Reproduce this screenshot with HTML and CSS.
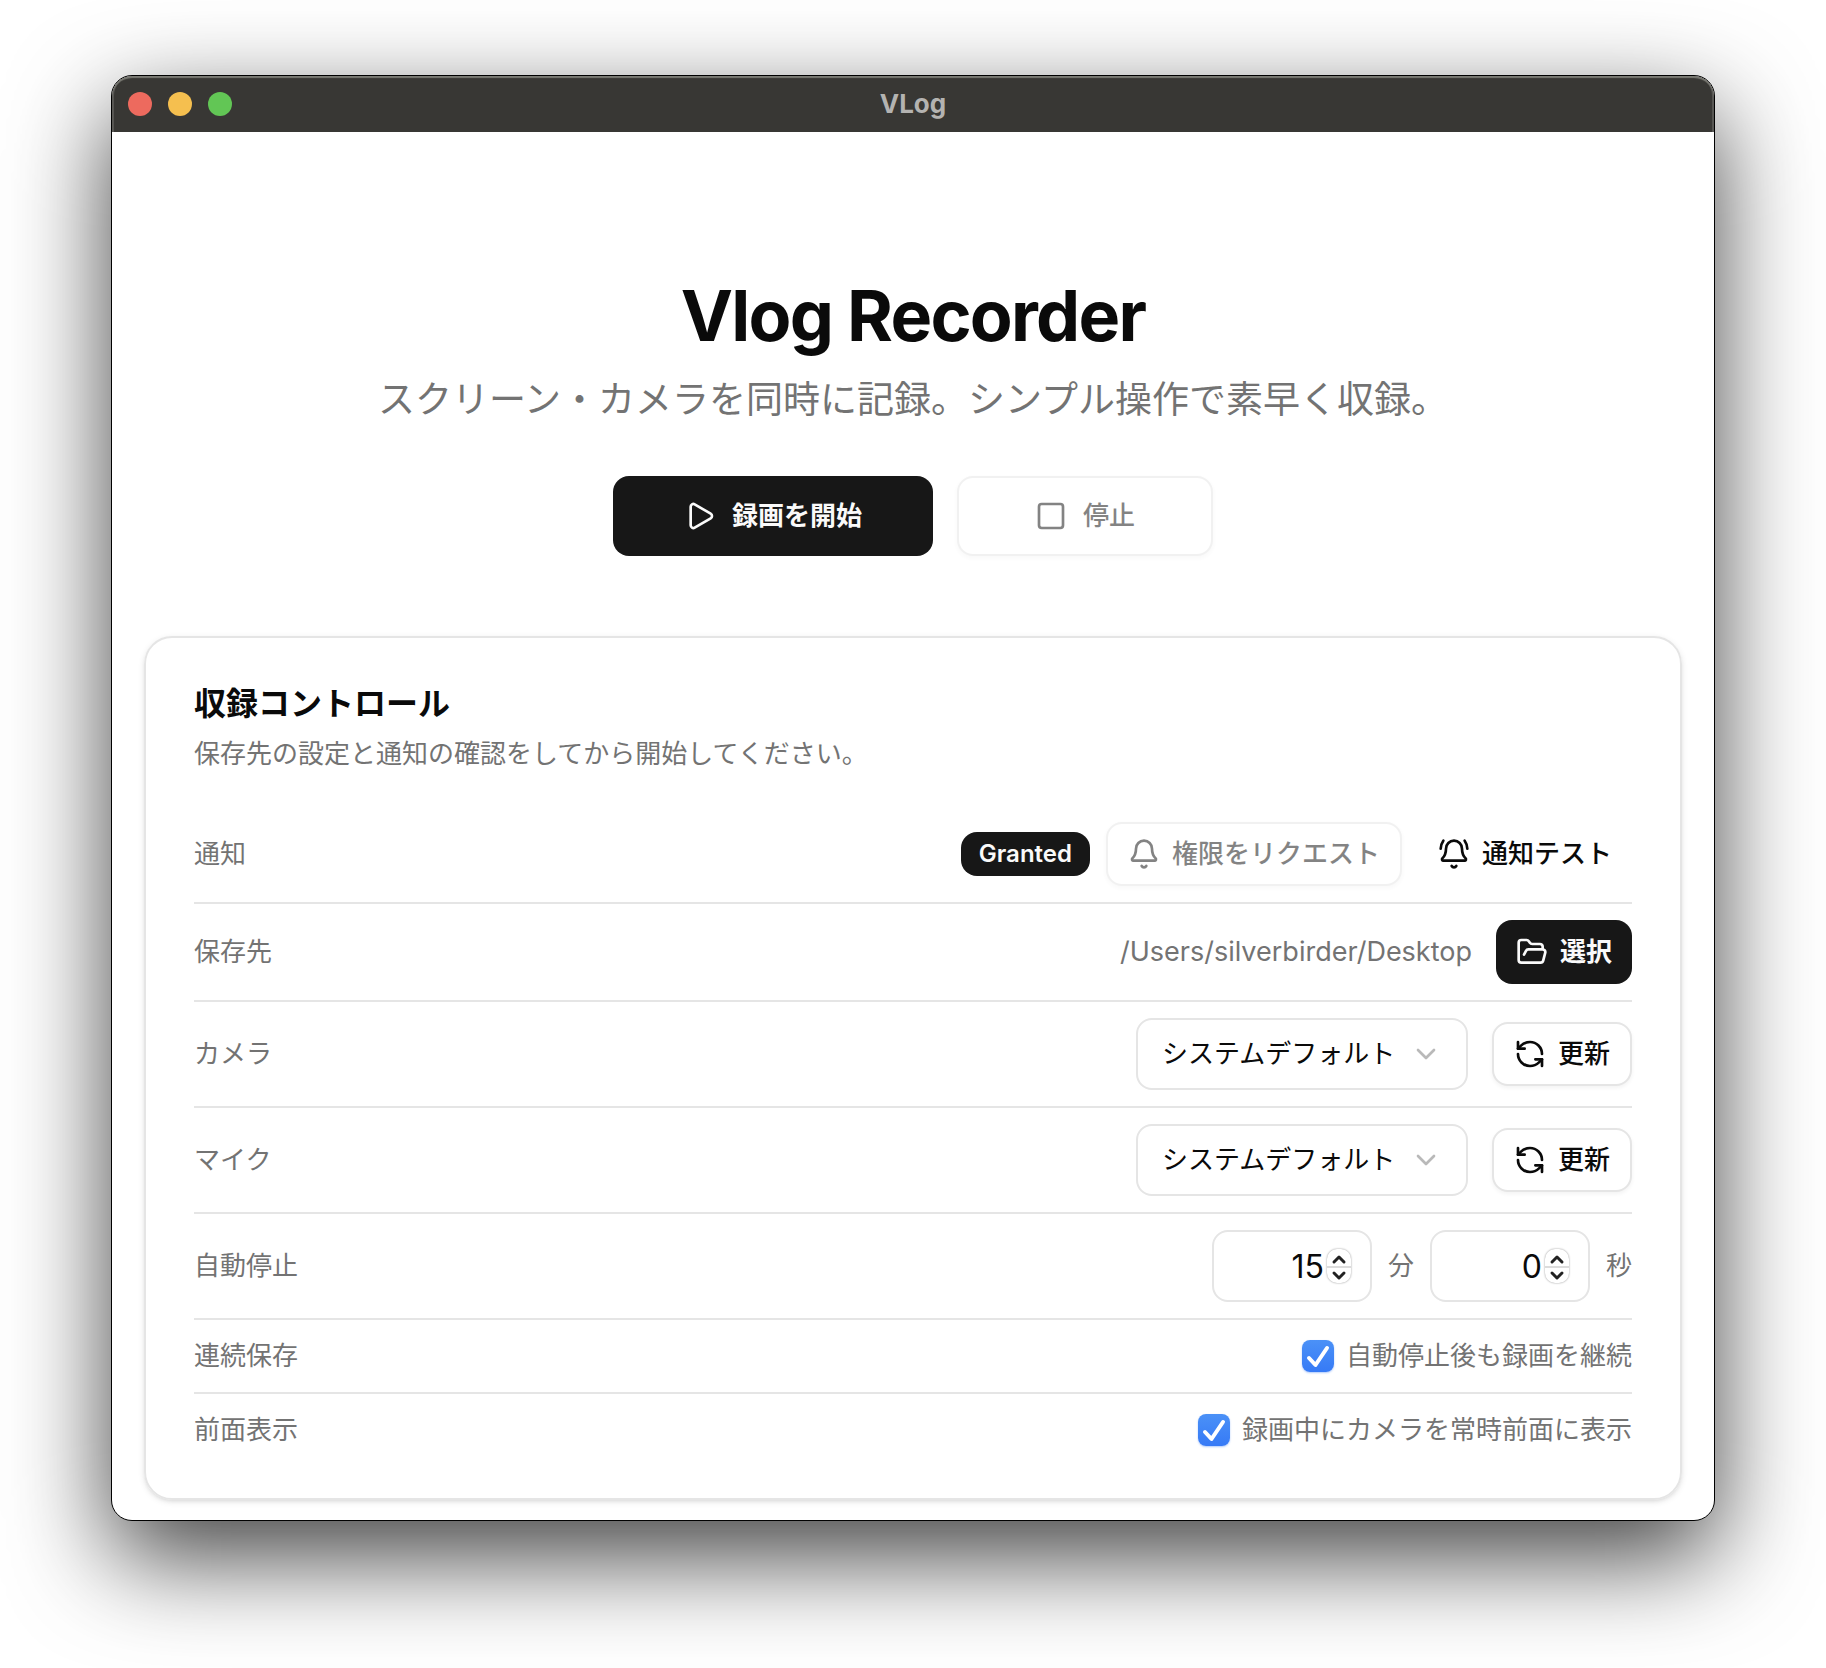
FILE: index.html
```html
<!DOCTYPE html>
<html lang="ja">
<head>
<meta charset="utf-8">
<meta name="viewport" content="width=device-width, initial-scale=1">
<title>VLog</title>
<link rel="stylesheet" href="styles.css">
</head>
<body>
<svg class="sprite" aria-hidden="true">
  <symbol id="play" viewBox="0 0 24 24"><path d="M5 5a2 2 0 0 1 3.008-1.728l11.997 6.998a2 2 0 0 1 .003 3.458l-12 7A2 2 0 0 1 5 19z"/></symbol>
  <symbol id="square" viewBox="0 0 24 24"><rect x="3" y="3" width="18" height="18" rx="2"/></symbol>
  <symbol id="bell" viewBox="0 0 24 24"><path d="M10.268 21a2 2 0 0 0 3.464 0"/><path d="M3.262 15.326A1 1 0 0 0 4 17h16a1 1 0 0 0 .74-1.673C19.41 13.956 18 12.499 18 8A6 6 0 0 0 6 8c0 4.499-1.411 5.956-2.738 7.326"/></symbol>
  <symbol id="bell-ring" viewBox="0 0 24 24"><path d="M10.268 21a2 2 0 0 0 3.464 0"/><path d="M22 8c0-2.3-.8-4.3-2-6"/><path d="M3.262 15.326A1 1 0 0 0 4 17h16a1 1 0 0 0 .74-1.673C19.41 13.956 18 12.499 18 8A6 6 0 0 0 6 8c0 4.499-1.411 5.956-2.738 7.326"/><path d="M4 2C2.8 3.7 2 5.7 2 8"/></symbol>
  <symbol id="folder" viewBox="0 0 24 24"><path d="m6 14 1.5-2.9A2 2 0 0 1 9.24 10H20a2 2 0 0 1 1.94 2.5l-1.54 6a2 2 0 0 1-1.95 1.5H4a2 2 0 0 1-2-2V5a2 2 0 0 1 2-2h3.9a2 2 0 0 1 1.69.9l.81 1.2a2 2 0 0 0 1.67.9H18a2 2 0 0 1 2 2v2"/></symbol>
  <symbol id="refresh" viewBox="0 0 24 24"><path d="M21 12a9 9 0 0 0-9-9 9.75 9.75 0 0 0-6.74 2.74L3 8"/><path d="M3 3v5h5"/><path d="M3 12a9 9 0 0 0 9 9 9.75 9.75 0 0 0 6.74-2.74L21 16"/><path d="M16 16h5v5"/></symbol>
  <symbol id="chevron" viewBox="0 0 24 24"><path d="m6 9 6 6 6-6"/></symbol>
  <symbol id="step-up" viewBox="0 0 24 17"><path d="m7 13 5-5 5 5"/></symbol>
  <symbol id="step-down" viewBox="0 0 24 17"><path d="m7 5 5 5 5-5"/></symbol>
</svg>

<div class="window">
  <header class="titlebar">
    <div class="lights">
      <span class="light light-close"></span>
      <span class="light light-minimize"></span>
      <span class="light light-zoom"></span>
    </div>
    <span class="titlebar-title">VLog</span>
  </header>

  <main class="content">
    <section class="hero">
      <h1 class="hero-title">Vlog Recorder</h1>
      <p class="hero-text">スクリーン・カメラを同時に記録。シンプル操作で素早く収録。</p>
      <div class="hero-actions">
        <button type="button" class="button button-primary button-large button-record"><svg class="icon"><use href="#play"/></svg>録画を開始</button>
        <button type="button" class="button button-outline button-large button-stop" disabled><svg class="icon"><use href="#square"/></svg>停止</button>
      </div>
    </section>

    <section class="card">
      <div class="card-header">
        <h2 class="card-title">収録コントロール</h2>
        <p class="card-text">保存先の設定と通知の確認をしてから開始してください。</p>
      </div>
      <div class="rows">
        <div class="row">
          <span class="row-label">通知</span>
          <div class="controls">
            <span class="badge">Granted</span>
            <button type="button" class="button button-outline" disabled><svg class="icon"><use href="#bell"/></svg>権限をリクエスト</button>
            <button type="button" class="button button-ghost"><svg class="icon"><use href="#bell-ring"/></svg>通知テスト</button>
          </div>
        </div>
        <div class="row">
          <span class="row-label">保存先</span>
          <div class="controls controls-wide">
            <span class="path">/Users/silverbirder/Desktop</span>
            <button type="button" class="button button-primary"><svg class="icon"><use href="#folder"/></svg>選択</button>
          </div>
        </div>
        <div class="row">
          <label class="row-label" for="camera">カメラ</label>
          <div class="controls controls-wide">
            <div class="select">
              <select class="select-field" id="camera"><option>システムデフォルト</option></select>
              <svg class="icon select-icon"><use href="#chevron"/></svg>
            </div>
            <button type="button" class="button button-outline"><svg class="icon"><use href="#refresh"/></svg>更新</button>
          </div>
        </div>
        <div class="row">
          <label class="row-label" for="mic">マイク</label>
          <div class="controls controls-wide">
            <div class="select">
              <select class="select-field" id="mic"><option>システムデフォルト</option></select>
              <svg class="icon select-icon"><use href="#chevron"/></svg>
            </div>
            <button type="button" class="button button-outline"><svg class="icon"><use href="#refresh"/></svg>更新</button>
          </div>
        </div>
        <div class="row">
          <span class="row-label">自動停止</span>
          <div class="controls">
            <div class="number">
              <input class="number-field" id="minutes" type="number" min="0" value="15">
              <div class="stepper">
                <button type="button" class="step" aria-label="分を増やす"><svg class="step-icon"><use href="#step-up"/></svg></button>
                <button type="button" class="step" aria-label="分を減らす"><svg class="step-icon"><use href="#step-down"/></svg></button>
              </div>
            </div>
            <label class="unit" for="minutes">分</label>
            <div class="number">
              <input class="number-field" id="seconds" type="number" min="0" max="59" value="0">
              <div class="stepper">
                <button type="button" class="step" aria-label="秒を増やす"><svg class="step-icon"><use href="#step-up"/></svg></button>
                <button type="button" class="step" aria-label="秒を減らす"><svg class="step-icon"><use href="#step-down"/></svg></button>
              </div>
            </div>
            <label class="unit" for="seconds">秒</label>
          </div>
        </div>
        <div class="row">
          <span class="row-label">連続保存</span>
          <label class="check"><input class="check-box" type="checkbox" checked>自動停止後も録画を継続</label>
        </div>
        <div class="row">
          <span class="row-label">前面表示</span>
          <label class="check"><input class="check-box" type="checkbox" checked>録画中にカメラを常時前面に表示</label>
        </div>
      </div>
    </section>
  </main>
</div>
</body>
</html>
```

FILE: styles.css
```css
:root {
  --ink: #0a0a0a;
  --primary: #171717;
  --muted: #737373;
  --line: #e5e5e5;
  --radius: 16px;
}

*,
*::before,
*::after {
  box-sizing: border-box;
}

body {
  margin: 0;
  padding: 75px 111px 147px;
  background: #fff;
  color: var(--ink);
  font-family: Inter, "Noto Sans CJK JP", sans-serif;
  font-size: 26px;
  line-height: 40px;
}

h1,
h2,
p {
  margin: 0;
}

button,
input,
select {
  font: inherit;
  color: inherit;
}

.sprite {
  display: none;
}

.icon {
  width: 32px;
  height: 32px;
  flex: none;
  fill: none;
  stroke: currentColor;
  stroke-width: 2;
  stroke-linecap: round;
  stroke-linejoin: round;
}

/* Window frame */

.window {
  overflow: hidden;
  border: 1px solid #000;
  border-radius: 21px;
  background: #fff;
  box-shadow: 0 36px 100px rgba(0, 0, 0, 0.75);
}

.titlebar {
  display: grid;
  grid-template-columns: 1fr auto 1fr;
  align-items: center;
  height: 56px;
  padding: 0 16px;
  border-radius: 20px 20px 0 0;
  background: #383734;
  box-shadow: inset 0 2px 1px #7b7b74, inset 2px 0 0 #565552, inset -2px 0 0 #565552;
}

.lights {
  display: flex;
  gap: 16px;
}

.light {
  width: 24px;
  height: 24px;
  border-radius: 50%;
}

.light-close {
  background: #ed6a5e;
}

.light-minimize {
  background: #f5bf4f;
}

.light-zoom {
  background: #62c655;
}

.titlebar-title {
  color: #b4b3b1;
  font-weight: 700;
}

/* Page */

.content {
  display: flex;
  flex-direction: column;
  gap: 80px;
  padding: 144px 32px 20px;
}

.hero {
  display: flex;
  flex-direction: column;
  align-items: center;
  text-align: center;
}

.hero-title {
  font-size: 70px;
  font-weight: 700;
  line-height: 80px;
  letter-spacing: -0.025em;
}

.hero-text {
  margin-top: 16px;
  color: var(--muted);
  font-size: 37px;
  line-height: 56px;
}

.hero-actions {
  display: flex;
  gap: 24px;
  margin-top: 48px;
}

/* Buttons */

.button {
  display: inline-flex;
  align-items: center;
  justify-content: center;
  gap: 12px;
  height: 64px;
  padding: 0 20px;
  border: 0;
  border-radius: var(--radius);
  background: none;
  font-weight: 500;
  white-space: nowrap;
}

.button:disabled {
  opacity: 0.5;
}

.button-primary {
  background: var(--primary);
  color: #fafafa;
  font-weight: 600;
}

.button-outline {
  border: 2px solid var(--line);
  background: #fff;
  box-shadow: 0 2px 4px rgba(0, 0, 0, 0.05);
}

.button-large {
  gap: 16px;
  height: 80px;
}

.button-record {
  width: 320px;
}

.button-stop {
  width: 256px;
}

/* Card */

.card {
  display: flex;
  flex-direction: column;
  gap: 48px;
  padding: 48px;
  border: 2px solid var(--line);
  border-radius: 28px;
  box-shadow: 0 2px 6px rgba(0, 0, 0, 0.1), 0 2px 4px -2px rgba(0, 0, 0, 0.1);
}

.card-header {
  display: flex;
  flex-direction: column;
  gap: 12px;
}

.card-title {
  font-size: 32px;
  font-weight: 600;
  line-height: 36px;
}

.card-text {
  color: var(--muted);
}

.row {
  display: flex;
  align-items: center;
  justify-content: space-between;
  padding: 16px 0;
  border-bottom: 2px solid var(--line);
}

.row:first-child {
  padding-top: 0;
}

.row:last-child {
  padding-bottom: 0;
  border-bottom: 0;
}

.row-label,
.path,
.unit,
.check {
  color: var(--muted);
}

.controls {
  display: flex;
  align-items: center;
  gap: 16px;
}

.controls-wide {
  gap: 24px;
}

.badge {
  padding: 6px 18px;
  border-radius: var(--radius);
  background: var(--primary);
  color: #fafafa;
  font-size: 24px;
  font-weight: 600;
  line-height: 32px;
}

.path {
  font-size: 27px;
}

/* Fields: the icon or stepper shares the grid cell with the control */

.select,
.number {
  display: grid;
  align-items: center;
}

.select > *,
.number > * {
  grid-area: 1 / 1;
}

.select-field,
.number-field {
  height: 72px;
  border: 2px solid var(--line);
  border-radius: var(--radius);
  background: #fff;
  appearance: none;
}

.select-field {
  width: 332px;
  padding: 0 64px 0 24px;
}

.select-icon {
  justify-self: end;
  margin-right: 26px;
  color: #b9b9b9;
  pointer-events: none;
}

.number-field {
  width: 160px;
  padding: 0 46px 0 24px;
  font-size: 32px;
  text-align: right;
  appearance: textfield;
}

.number-field::-webkit-inner-spin-button {
  appearance: none;
}

.stepper {
  display: flex;
  flex-direction: column;
  justify-self: end;
  width: 24px;
  height: 34px;
  margin-right: 21px;
  overflow: hidden;
  border-radius: 10px;
  background: #fff;
  box-shadow: 0 0 2px rgba(0, 0, 0, 0.45);
}

.step {
  display: flex;
  height: 17px;
  padding: 0;
  border: 0;
  background: none;
}

.step + .step {
  border-top: 2px solid #dcdcdc;
}

.step-icon {
  width: 24px;
  height: 17px;
  fill: none;
  stroke: #222;
  stroke-width: 3;
  stroke-linecap: round;
  stroke-linejoin: round;
}

.check {
  display: flex;
  align-items: center;
  gap: 12px;
}

.check-box {
  width: 32px;
  height: 32px;
  margin: 0;
  border-radius: 8px;
  appearance: none;
  box-shadow: 0 1px 2px rgba(54, 122, 246, 0.4);
}

.check-box:checked {
  background:
    url("data:image/svg+xml,%3Csvg xmlns='http://www.w3.org/2000/svg' viewBox='0 0 32 32' fill='none' stroke='white' stroke-width='4' stroke-linecap='round' stroke-linejoin='round'%3E%3Cpath d='M7 18l6.500 7L25 8'/%3E%3C/svg%3E"),
    linear-gradient(#4b91f7, #367af6);
}
```
